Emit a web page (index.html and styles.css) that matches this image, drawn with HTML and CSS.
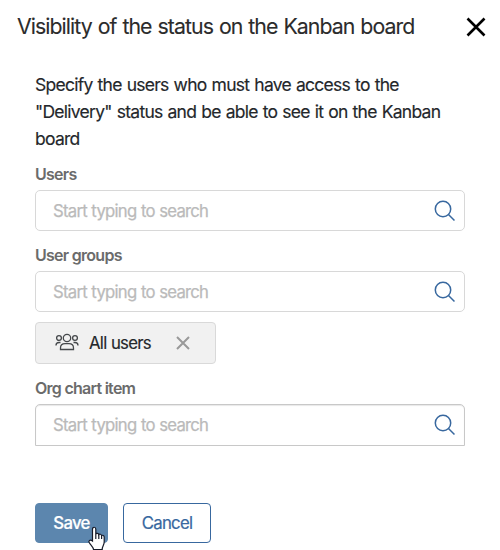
FILE: index.html
```html
<!DOCTYPE html>
<html lang="en">
<head>
<meta charset="utf-8">
<title>Visibility of the status on the Kanban board</title>
<link rel="stylesheet" href="styles.css">
</head>
<body>
<main class="dialog">
  <header class="header">
    <h1 class="title">Visibility of the status on the Kanban board</h1>
    <svg class="close" viewBox="0 0 20 20"><path d="M1.5 1.5l17 17M18.500 1.500l-17 17"/></svg>
  </header>
  <p class="intro">Specify the users who must have access to the<br>"Delivery" status and be able to see it on the Kanban<br>board</p>
  <section class="group">
    <div class="label users">Users</div>
    <div class="field"><span class="hint">Start typing to search</span><svg class="search" viewBox="0 0 22 22"><circle cx="9" cy="9" r="7.700"/><path d="M14.500 14.500l6 6"/></svg></div>
  </section>
  <section class="group">
    <div class="label groups">User groups</div>
    <div class="field"><span class="hint">Start typing to search</span><svg class="search" viewBox="0 0 22 22"><circle cx="9" cy="9" r="7.700"/><path d="M14.500 14.500l6 6"/></svg></div>
    <div class="chip">
      <svg class="people" viewBox="0 0 24 18"><circle cx="12" cy="5" r="3.700"/><path d="M5.500 16.500v-1.500c0-2.700 2-4.300 4.500-4.300h4c2.500 0 4.500 1.600 4.500 4.300v1.500z"/><circle cx="4" cy="5" r="2.400"/><circle cx="20" cy="5" r="2.400"/><path d="M1 12.500c0-2 1-3 3-3h1.500M23 12.500c0-2-1-3-3-3h-1.500"/></svg>
      <span class="name">All users</span>
      <svg class="remove" viewBox="0 0 14 14"><path d="M1 1l12 12M13 1L1 13"/></svg>
    </div>
  </section>
  <section class="group">
    <div class="label org">Org chart item</div>
    <div class="field active"><span class="hint">Start typing to search</span><svg class="search" viewBox="0 0 22 22"><circle cx="9" cy="9" r="7.700"/><path d="M14.500 14.500l6 6"/></svg></div>
  </section>
  <footer class="actions">
    <button class="btn save"><span>Save</span></button>
    <button class="btn cancel"><span>Cancel</span></button>
  </footer>
</main>
<svg class="cursor" viewBox="0 0 20 25"><path d="M6.500 15V3.200c0-2.600 3.300-2.600 3.300 0V8c.5-1 2.800-.8 3 .7.700-.9 2.600-.5 2.800.9.900-.8 2.600-.1 2.600 1.400v5c0 3-2 4-2 7.500H7.500c0-2-2.500-4-4.200-6.700-1.300-2 .7-3.800 3.200-1.800z"/><path d="M9.800 8v5M12.800 8.700V13M15.600 9.600V13"/></svg>
</body>
</html>
```
FILE: styles.css
```css
* { box-sizing: border-box; }
body { margin: 0; width: 500px; height: 550px; overflow: hidden; background: #fff; font-family: Inter, "Liberation Sans", sans-serif; color: #24272b; }
svg { fill: none; flex: none; }
.dialog { padding: 0 35px; }
.header { display: flex; height: 54px; align-items: center; justify-content: space-between; margin: 0 -21px 0 -18px; }
.title { margin: -2px 0 0; font-size: 21.3px; font-weight: 400; letter-spacing: -0.94px; word-spacing: 0.9px; white-space: nowrap; color: #2b2b2b; -webkit-text-stroke: 0.1px; }
.close { width: 20px; height: 20px; stroke: #000; stroke-width: 2.6; }
.intro { margin: 17px 0 0; font-size: 17.5px; line-height: 27px; letter-spacing: -0.73px; word-spacing: 0.8px; white-space: nowrap; -webkit-text-stroke: 0.15px; }
.label { height: 38px; padding-top: 12px; font-size: 16px; line-height: 20px; font-weight: 600; letter-spacing: -0.73px; color: #6b6b6b; }
.groups { height: 40px; padding-top: 14px; }
.field { display: flex; height: 41px; align-items: center; justify-content: space-between; padding: 0 8px 0 17px; border: 1px solid #d8d8d8; border-radius: 5px; }
.hint { font-size: 16.7px; letter-spacing: -0.74px; word-spacing: 0.5px; color: #bababa; -webkit-text-stroke: 0.25px; }
.search { width: 22px; height: 22px; stroke: #38689f; stroke-width: 1.5; }
.chip { display: flex; width: 181px; height: 42px; align-items: center; margin-top: 10px; padding-left: 19px; border: 1px solid #d9d9d9; border-radius: 4px; background: #f1f1f1; }
.people { width: 24px; height: 18px; margin-top: -2px; stroke: #45484b; stroke-width: 1.3; }
.name { width: 87px; margin-left: 10px; font-size: 16.8px; letter-spacing: -0.75px; word-spacing: 0.5px; white-space: nowrap; -webkit-text-stroke: 0.15px; }
.remove { width: 14px; height: 14px; stroke: #999; stroke-width: 2; }
.org { height: 40px; padding-top: 14px; }
.active { height: 42px; border-color: #c8c8c8; border-radius: 5px 5px 0 0; box-shadow: inset 0 1px 1px #e8e8e8; }
.actions { display: flex; gap: 15px; margin-top: 57px; }
.btn { height: 40px; padding: 0; border: 1px solid #38689f; border-radius: 4px; background: #fff; font: 400 16.8px Inter, sans-serif; letter-spacing: -0.75px; color: #38689f; -webkit-text-stroke: 0.2px; }
.save { width: 73px; border-color: #5c86ae; background: #5c86ae; color: #fff; font-weight: 500; }
.cancel { width: 88px; }
.cursor { position: absolute; left: 86px; top: 526px; width: 20px; height: 25px; fill: #fff; stroke: #161a28; stroke-width: 1.2; }
```
